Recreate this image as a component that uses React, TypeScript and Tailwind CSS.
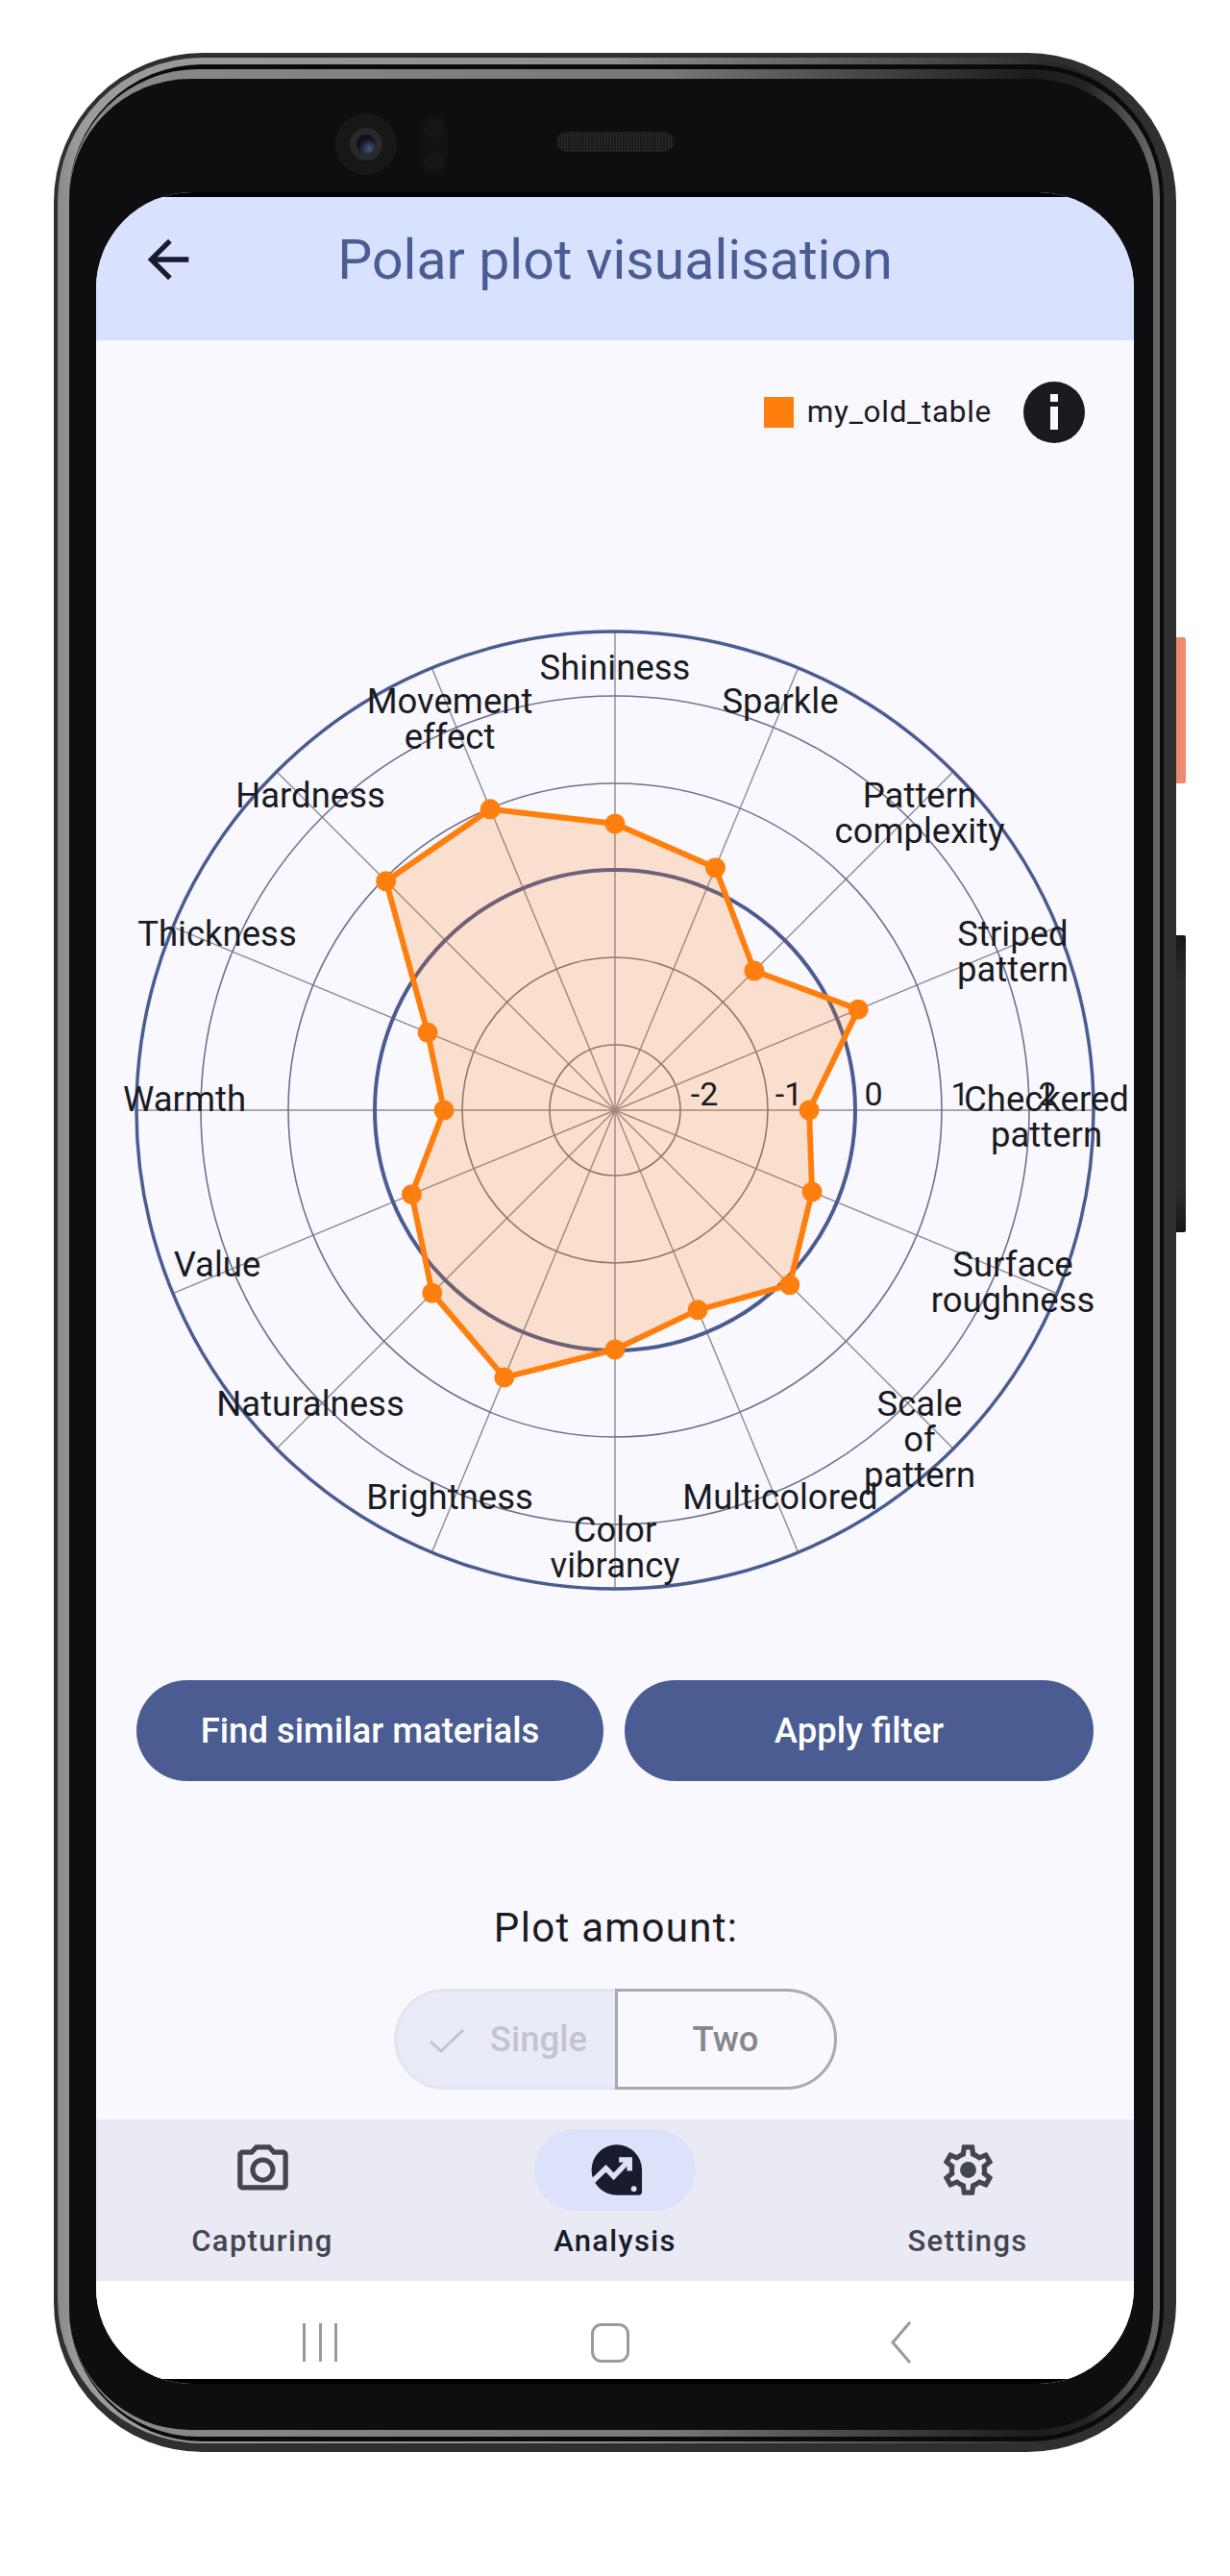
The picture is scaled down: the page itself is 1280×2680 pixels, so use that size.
const CX = 540;
const CY = 694;

// distance from the centre of each data point, clockwise from the top
const radii = [298, 273, 205, 274, 202, 222, 257, 225, 249, 301, 269, 229, 178, 211, 337, 339];

const points = radii.map((r, i) => {
  const a = (i * Math.PI) / 8;
  return { x: CX + r * Math.sin(a), y: CY - r * Math.cos(a) };
});

const axes = radii.map((_, i) => {
  const a = (i * Math.PI) / 8;
  return { x: CX + 498 * Math.sin(a), y: CY - 498 * Math.cos(a) };
});

// x is the text centre, y the first baseline (both in chart coordinates)
const labels = [
  { x: 540, y: 245.5, lines: ["Shininess"] },
  { x: 368, y: 280.5, lines: ["Movement", "effect"] },
  { x: 712, y: 280.5, lines: ["Sparkle"] },
  { x: 223, y: 378.5, lines: ["Hardness"] },
  { x: 857, y: 378.5, lines: ["Pattern", "complexity"] },
  { x: 126, y: 522.5, lines: ["Thickness"] },
  { x: 954, y: 522.5, lines: ["Striped", "pattern"] },
  { x: 92, y: 694.5, lines: ["Warmth"] },
  { x: 989, y: 694.5, lines: ["Checkered", "pattern"] },
  { x: 126, y: 866.5, lines: ["Value"] },
  { x: 954, y: 866.5, lines: ["Surface", "roughness"] },
  { x: 223, y: 1012, lines: ["Naturalness"] },
  { x: 857, y: 1012, lines: ["Scale", "of", "pattern"] },
  { x: 368, y: 1108.5, lines: ["Brightness"] },
  { x: 712, y: 1108.5, lines: ["Multicolored"] },
  { x: 540, y: 1143, lines: ["Color", "vibrancy"] },
];

const ticks = [
  { x: 633, label: "-2" },
  { x: 721, label: "-1" },
  { x: 809, label: "0" },
  { x: 899, label: "1" },
  { x: 990, label: "2" },
];

function PolarChart() {
  const polygon = points.map((p) => `${p.x},${p.y}`).join(" ");
  return (
    <svg width="1080" height="1230" viewBox="0 0 1080 1230" className="block">
      {axes.map((p, i) => (
        <line key={i} x1={CX} y1={CY} x2={p.x} y2={p.y} stroke="#8b8b92" strokeWidth="1.4" />
      ))}
      <circle cx={CX} cy={CY} r="68" fill="none" stroke="#76767c" strokeWidth="1.6" />
      <circle cx={CX} cy={CY} r="159" fill="none" stroke="#76767c" strokeWidth="1.6" />
      <circle cx={CX} cy={CY} r="250" fill="none" stroke="#4a5c92" strokeWidth="4" />
      <circle cx={CX} cy={CY} r="340" fill="none" stroke="#6d7390" strokeWidth="1.6" />
      <circle cx={CX} cy={CY} r="431" fill="none" stroke="#6d7390" strokeWidth="1.6" />
      <circle cx={CX} cy={CY} r="498" fill="none" stroke="#4a5c92" strokeWidth="3.5" />
      <polygon points={polygon} fill="#ff7f0e" fillOpacity="0.2" stroke="#ff7f0e" strokeWidth="6" strokeLinejoin="round" />
      {points.map((p, i) => (
        <circle key={i} cx={p.x} cy={p.y} r="10.5" fill="#ff7f0e" />
      ))}
      <g fontSize="36.5" fill="#1a1b21" textAnchor="middle">
        {labels.map((l) =>
          l.lines.map((line, i) => (
            <text key={line + l.x} x={l.x} y={l.y + i * 37}>
              {line}
            </text>
          ))
        )}
      </g>
      <g fontSize="34" fill="#1a1b21" textAnchor="middle">
        {ticks.map((t) => (
          <text key={t.label} x={t.x} y={689}>
            {t.label}
          </text>
        ))}
      </g>
    </svg>
  );
}

function BackArrow() {
  return (
    <svg width="64" height="64" viewBox="0 0 24 24" fill="#1a1b2e">
      <path d="M20 11H7.83l5.59-5.59L12 4l-8 8 8 8 1.41-1.41L7.83 13H20v-2z" />
    </svg>
  );
}

function InfoIcon() {
  return (
    <svg width="64" height="64" viewBox="0 0 64 64">
      <circle cx="32" cy="32" r="32" fill="#1a1b21" />
      <rect x="28" y="13" width="8" height="8" fill="#f9f8fe" />
      <rect x="28" y="26" width="8" height="24" fill="#f9f8fe" />
    </svg>
  );
}

function CameraIcon() {
  return (
    <svg width="63" height="63" viewBox="0 0 24 24" fill="#44464f">
      <path d="M14.12 4l1.83 2H20v12H4V6h4.05l1.83-2h4.24M15 2H9L7.17 4H4c-1.1 0-2 .9-2 2v12c0 1.1.9 2 2 2h16c1.1 0 2-.9 2-2V6c0-1.1-.9-2-2-2h-3.17L15 2zm-3 7c1.65 0 3 1.35 3 3s-1.35 3-3 3-3-1.35-3-3 1.35-3 3-3m0-2c-2.76 0-5 2.24-5 5s2.24 5 5 5 5-2.24 5-5-2.24-5-5-5z" />
    </svg>
  );
}

function AnalysisIcon() {
  return (
    <svg width="63" height="63" viewBox="0 0 24 24">
      <path
        d="M12.5 2a10 10 0 1 0 0 20h8.6a1.4 1.4 0 0 0 1.4-1.4V12A10 10 0 0 0 12.5 2z"
        fill="#191c2e"
      />
      <path d="M3.1 16.4 8.2 11.4 11.3 14.6 17 8.6" fill="none" stroke="#dce2f9" strokeWidth="2.1" />
      <path d="M13.4 8H17.6V12.4" fill="none" stroke="#dce2f9" strokeWidth="2.1" />
      <circle cx="19.3" cy="19.5" r="1.1" fill="#dce2f9" />
    </svg>
  );
}

function GearIcon() {
  return (
    <svg width="63" height="63" viewBox="0 0 24 24" fill="#44464f">
      <path d="M19.43 12.98c.04-.32.07-.64.07-.98 0-.34-.03-.66-.07-.98l2.11-1.65c.19-.15.24-.42.12-.64l-2-3.46c-.09-.16-.26-.25-.44-.25-.06 0-.12.01-.17.03l-2.49 1c-.52-.4-1.08-.73-1.69-.98l-.38-2.65C14.46 2.18 14.25 2 14 2h-4c-.25 0-.46.18-.49.42l-.38 2.65c-.61.25-1.17.59-1.69.98l-2.49-1c-.06-.02-.12-.03-.18-.03-.17 0-.34.09-.43.25l-2 3.46c-.13.22-.07.49.12.64l2.11 1.65c-.04.32-.07.65-.07.98 0 .33.03.66.07.98l-2.11 1.65c-.19.15-.24.42-.12.64l2 3.46c.09.16.26.25.44.25.06 0 .12-.01.17-.03l2.49-1c.52.4 1.08.73 1.69.98l.38 2.65c.03.24.24.42.49.42h4c.25 0 .46-.18.49-.42l.38-2.65c.61-.25 1.17-.59 1.69-.98l2.49 1c.06.02.12.03.18.03.17 0 .34-.09.43-.25l2-3.46c.12-.22.07-.49-.12-.64l-2.11-1.65zm-1.98-1.71c.04.31.05.52.05.73 0 .21-.02.43-.05.73l-.14 1.13.89.7 1.08.84-.7 1.21-1.27-.51-1.04-.42-.9.68c-.43.32-.84.56-1.25.73l-1.06.43-.16 1.13-.2 1.35h-1.4l-.19-1.35-.16-1.13-1.06-.43c-.43-.18-.83-.41-1.23-.71l-.91-.7-1.06.43-1.27.51-.7-1.21 1.08-.84.89-.7-.14-1.13c-.03-.31-.05-.54-.05-.74s.02-.43.05-.73l.14-1.13-.89-.7-1.08-.84.7-1.21 1.27.51 1.04.42.9-.68c.43-.32.84-.56 1.25-.73l1.06-.43.16-1.13.2-1.35h1.39l.19 1.35.16 1.13 1.06.43c.43.18.83.41 1.23.71l.91.7 1.06-.43 1.27-.51.7 1.21-1.07.85-.89.7.14 1.13z" />
      <circle cx="12" cy="12" r="3.2" />
    </svg>
  );
}

function NavItem({ label, active, children }: { label: string; active?: boolean; children: React.ReactNode }) {
  return (
    <div className="w-[367px] shrink-0 flex flex-col items-center pt-[10px]">
      <div className={`w-[168px] h-[85px] rounded-full flex items-center justify-center ${active ? "bg-[#dce2f9]" : ""}`}>
        {children}
      </div>
      <span className={`mt-[12px] text-[31px] leading-[40px] font-medium tracking-[1.3px] ${active ? "text-[#191c2e]" : "text-[#44464f]"}`}>
        {label}
      </span>
    </div>
  );
}

function Screen() {
  return (
    <div className="ml-[28px] w-[1080px] h-[2280px] rounded-[100px] overflow-hidden bg-white flex flex-col">
      <div className="h-[5px] shrink-0 bg-black" />

      <header className="h-[149px] shrink-0 bg-[#d8e2ff] flex items-center pl-[43px] pr-[107px] pb-[19px]">
        <BackArrow />
        <h1 className="flex-1 text-center text-[57.2px] leading-[72px] pt-[2px] font-normal text-[#4a5c92]">
          Polar plot visualisation
        </h1>
      </header>

      <main className="h-[1851px] shrink-0 bg-[#f9f8fe] flex flex-col">
        <div className="pt-[43px] pr-[51px] flex items-center justify-end">
          <span className="w-[31px] h-[32px] bg-[#ff7f0e]" />
          <span className="ml-[14px] text-[31.5px] leading-[40px] tracking-[0.7px] text-[#1a1b21]">my_old_table</span>
          <span className="ml-[33px]">
            <InfoIcon />
          </span>
        </div>

        <PolarChart />

        <div className="mt-[57px] pl-[42px] flex gap-[22px]">
          <button className="w-[486px] h-[105px] pt-[2px] rounded-full bg-[#4a5c92] text-white text-[36.5px] font-medium">
            Find similar materials
          </button>
          <button className="w-[488px] h-[105px] pt-[2px] rounded-full bg-[#4a5c92] text-white text-[36.5px] font-medium">
            Apply filter
          </button>
        </div>

        <p className="mt-[128px] text-center text-[42px] leading-[50px] tracking-[1.3px] text-[#1a1b21] pl-[2px]">Plot amount:</p>

        <div className="mt-[38px] mx-auto w-[461px] h-[105px] flex">
          <div className="w-[230px] pt-[2px] rounded-l-full border-[3px] border-r-0 border-[#e3e4ef] bg-[#e9ebf8] flex items-center justify-center gap-[27px] pl-[6px] text-[36.5px] font-medium text-[#c3c4cf]">
            <svg width="36" height="24" viewBox="0 0 36 24" fill="none" stroke="#c3c4cf" strokeWidth="3">
              <path d="M1 13 12 23 35 1" />
            </svg>
            Single
          </div>
          <div className="w-[231px] pt-[2px] rounded-r-full border-[3px] border-[#a9a9ae] flex items-center justify-center text-[36.5px] font-medium text-[#86868c]">
            Two
          </div>
        </div>
      </main>

      <nav className="h-[168px] shrink-0 bg-[#eaeaf5] flex justify-center">
        <NavItem label="Capturing">
          <CameraIcon />
        </NavItem>
        <NavItem label="Analysis" active>
          <AnalysisIcon />
        </NavItem>
        <NavItem label="Settings">
          <GearIcon />
        </NavItem>
      </nav>

      <div className="h-[102px] shrink-0 bg-white flex items-start pt-[44px] pl-[215px]">
        <div className="w-[36px] h-[40px] flex justify-between">
          <span className="w-[3px] h-full bg-[#9a9a9a]" />
          <span className="w-[3px] h-full bg-[#9a9a9a]" />
          <span className="w-[3px] h-full bg-[#9a9a9a]" />
        </div>
        <div className="ml-[264px] w-[40px] h-[41px] rounded-[11px] border-[3px] border-[#9a9a9a]" />
        <svg className="ml-[271px] -mt-[2px]" width="24" height="44" viewBox="0 0 24 44" fill="none" stroke="#9a9a9a" strokeWidth="3">
          <path d="M21 1 3 22l18 21" />
        </svg>
      </div>

      <div className="h-[5px] shrink-0 bg-black" />
    </div>
  );
}

export default function App() {
  return (
    <div className="w-[1280px] h-[2680px] bg-white pt-[55px] pl-[56px] flex font-[Roboto,sans-serif]">
      {/* Phone shell, each layer is one band of the frame */}
      <div className="w-[1168px] h-[2496px] rounded-[155px] bg-[#2f2f2f] pt-[5px] pl-[4px] pr-[13px] pb-[9px]">
        <div className="h-full rounded-[150px] pt-[7px] pb-[2px] pl-[12px] bg-[linear-gradient(to_right,#8a8a8a_0%,#9c9c9c_2%,#8f8f8f_50%,#3a3a3a_85%,#0a0a0a_100%)]">
          <div className="h-full rounded-[138px] bg-[#0a0a0a] pt-[5px] pb-[5px] pr-[4px]">
            <div className="h-full rounded-[134px] pr-[7px] pb-[7px] pt-[10px] bg-[linear-gradient(to_right,#8a8a8a_0%,#8a8a8a_3%,#777777_55%,#1c1c1c_88%,#222222_93%,#666666_99%)]">
              <div className="h-full rounded-[126px] bg-[#0e0e10]">
                {/* Camera, sensors and speaker */}
                <div className="h-[118px] flex items-start pl-[277px]">
                  <div className="mt-[36px] w-[64px] h-[64px] rounded-full bg-[#171718] flex items-center justify-center">
                    <div className="w-[34px] h-[34px] rounded-full bg-[#29292b] flex items-center justify-center">
                      <div className="w-[20px] h-[20px] rounded-full bg-[radial-gradient(circle_at_65%_75%,#46568a_0%,#10121c_55%,#0a0a0c_100%)]" />
                    </div>
                  </div>
                  <div className="mt-[38px] ml-[25px] w-[28px] h-[62px] rounded-full bg-[#121214] flex flex-col justify-between items-center py-[4px]">
                    <span className="w-[20px] h-[20px] rounded-full bg-[#161618]" />
                    <span className="w-[20px] h-[20px] rounded-full bg-[#161618]" />
                  </div>
                  <div className="mt-[55px] ml-[113px] w-[123px] h-[21px] rounded-full border border-[#1c1c1e] bg-[repeating-conic-gradient(#2b2b2d_0%_25%,#121214_0%_50%)] bg-[length:3px_3px]" />
                </div>
                <Screen />
              </div>
            </div>
          </div>
        </div>
      </div>

      {/* Side buttons */}
      <div className="w-[10px] flex flex-col">
        <div className="mt-[608px] h-[152px] rounded-r-[2px] bg-[#ee8a72]" />
        <div className="mt-[158px] h-[309px] rounded-r-[2px] bg-[linear-gradient(to_bottom,#161616,#2c2c2c_15%,#2c2c2c_85%,#161616)]" />
      </div>
    </div>
  );
}
